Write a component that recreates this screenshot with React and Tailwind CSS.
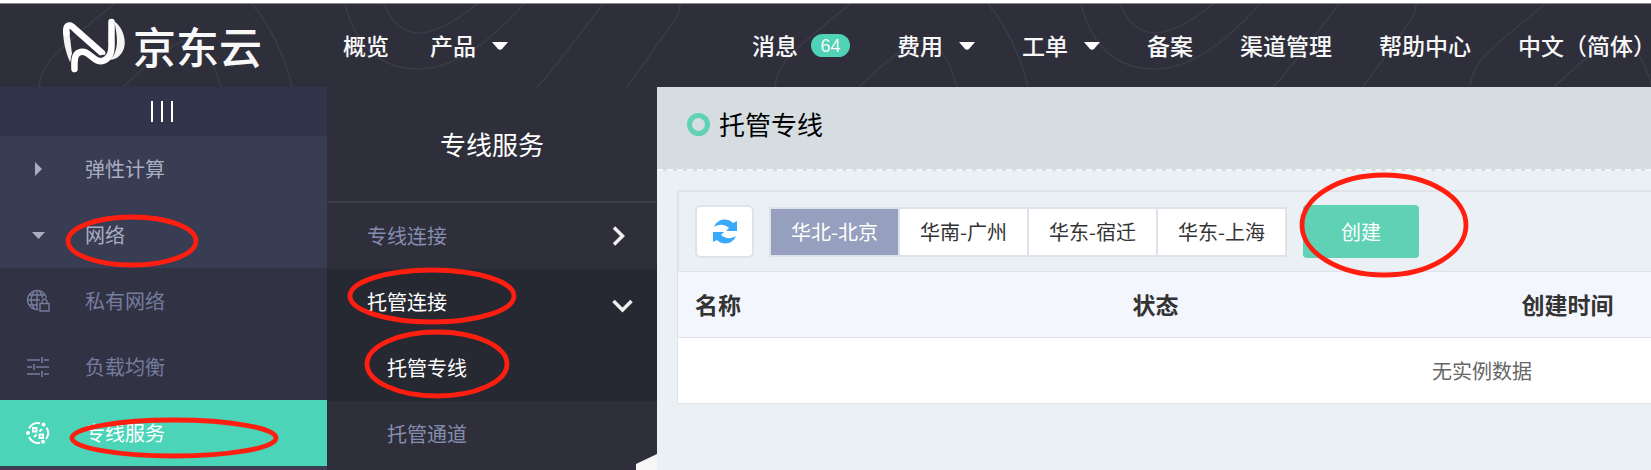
import { useState } from "react";

const MARKS = [
  [132, 241, 64, 24],
  [432, 296, 82, 26],
  [437, 364, 70, 32],
  [174, 438, 102, 18],
  [1384, 225, 82, 50],
];

function Contours() {
  return (
    <svg className="absolute inset-0 h-full w-full" fill="none" stroke="#393b47" strokeWidth="1.6" aria-hidden="true">
      <defs>
        <g id="arcs">
          <path d="M114 0C88 22 66 38 50 56Q40 70 39 83" />
          <path d="M123 83Q146 60 172 42Q188 32 200 40Q214 56 221 83" />
        </g>
        <g id="tile">
          <use href="#arcs" />
          <path d="M252 0Q280 34 292 83" />
          <path d="M384 0Q396 29 419 29T477 0" />
          <path d="M345 0Q362 65 419 65Q466 65 524 0" />
          <path d="M603 0L550 69L537 83" />
          <path d="M680 0Q680 10 672 20L627 83" />
        </g>
      </defs>
      <use href="#tile" />
      <use href="#tile" x="736" />
      <use href="#arcs" x="1431" />
    </svg>
  );
}

function Logo() {
  return (
    <svg width="65" height="57" viewBox="0 0 65 57" fill="none" stroke="#fff" strokeLinecap="round" strokeLinejoin="round" aria-hidden="true">
      <path d="M52 4C66 14 68 40 48 43C57 34 56 20 52 4Z" fill="#f4f4f4" stroke="none" />
      <path d="M1 12L7 12L10 37C8 42 9 46 8 45C3 34 1 22 1 12Z" fill="#f4f4f4" stroke="none" />
      <path strokeWidth="6.5" d="M4.500 16C3.500 11 5 8 8 8.500C10 8.800 12 11 14 13L40 36" />
      <path strokeWidth="8.500" stroke="#2e2f3b" d="M13 48C13 40 14 36 18 35C27 32 32 47 41 42" />
      <path strokeWidth="6.500" d="M12.500 52C12 42 13 37 17 35.500C27 31 32 48 42 43.500C52 39 49 26 49.500 20V5" />
    </svg>
  );
}

const Caret = () => (
  <svg width="16" height="8" viewBox="0 0 16 8" aria-hidden="true"><path d="M0 0H16L10 7Q8 8.500 6 7Z" fill="#fff" /></svg>
);

function NavLink({ children, caret, badge }) {
  return (
    <a href="#" className="flex shrink-0 items-center whitespace-nowrap">
      {children}
      {caret && <span className="ml-4"><Caret /></span>}
      {badge && <span className="ml-[13px] flex h-[23px] w-[39px] items-center justify-center rounded-full bg-[#4fd2b5] font-['Liberation_Sans'] text-lg">{badge}</span>}
    </a>
  );
}

function SideItem({ icon, children, className }) {
  return (
    <a href="#" className={"flex h-[66px] items-center pl-6 text-xl " + className}>
      <span className="mr-[33px] flex w-7 justify-center">{icon}</span>
      {children}
    </a>
  );
}

const VpcIcon = () => (
  <svg width="24" height="24" viewBox="0 0 24 24" fill="none" stroke="currentColor" strokeWidth="1.4" aria-hidden="true">
    <path d="M12.500 20.500A9.600 9.600 0 1 1 20.500 9M11 1.500V20.500M1.500 11H14M3 6H19M3 16H12M9 1.500C4 7 4 15 9 20.500M13 1.500Q16 5 16.500 9" />
    <path d="M14 14.500H23V22H14ZM16 14.500V12Q18.500 8 21 12V14.500" />
  </svg>
);
const BalanceIcon = () => (
  <svg width="24" height="24" viewBox="0 0 24 24" fill="none" stroke="currentColor" strokeWidth="1.6" aria-hidden="true">
    <path d="M1 5H14M18 5H23M1 12H6M10 12H23M1 19H14M18 19H23M16 2V8M8 9V15M16 16V22" />
  </svg>
);
const DirectIcon = () => (
  <svg width="24" height="24" viewBox="0 0 24 24" fill="none" stroke="currentColor" strokeWidth="2" aria-hidden="true">
    <path d="M3 7.500A10 10 0 0 1 14 2.200M20.500 6.500A10 10 0 0 1 20 18M14 21.800A10 10 0 0 1 3 16" />
    <path d="M7 7H10.500V10.500H7ZM13.500 13.500H17V17H13.500ZM8 16L10.500 13.500M13.500 10.500L16 8" />
    <g fill="currentColor" stroke="none"><circle cx="17.500" cy="3.500" r="2" /><circle cx="2" cy="12" r="2" /><circle cx="17" cy="20.800" r="2" /></g>
  </svg>
);

const REGIONS = ["华北-北京", "华南-广州", "华东-宿迁", "华东-上海"];

export default function App() {
  const [region, setRegion] = useState(0);
  return (
    <div className="relative flex min-h-screen flex-col overflow-hidden bg-white font-['Noto_Sans_CJK_SC',sans-serif]">
      <header className="relative mt-[3px] border-t border-[#8b8b91] bg-[#2e2f3b] text-[23px] font-medium text-[#f8f8f8]">
        <Contours />
        <nav className="relative flex h-[83px] items-center pl-[62px]">
          <a href="#" className="mr-[81px] flex shrink-0 items-center gap-1.5 text-[43px] leading-none whitespace-nowrap"><Logo />京东云</a>
          <div className="mr-[244px] flex shrink-0 gap-[41px]">
            <NavLink>概览</NavLink>
            <NavLink caret>产品</NavLink>
          </div>
          <div className="flex min-w-0 flex-1 gap-[47px]">
            <NavLink badge="64">消息</NavLink>
            <NavLink caret>费用</NavLink>
            <NavLink caret>工单</NavLink>
            <NavLink>备案</NavLink>
            <NavLink>渠道管理</NavLink>
            <NavLink>帮助中心</NavLink>
            <NavLink>中文（简体）</NavLink>
          </div>
        </nav>
      </header>
      <div className="flex flex-1">
        <aside className="w-[327px] shrink-0 bg-[#383d53]">
          <button aria-label="折叠菜单" className="flex h-[49px] w-full items-center justify-center gap-2 bg-[#31344b] pr-1">
            <i className="h-[21px] w-0.5 bg-white" /><i className="h-[21px] w-0.5 bg-white" /><i className="h-[21px] w-0.5 bg-white" />
          </button>
          <SideItem className="text-[#a9aec1]" icon={<svg width="7" height="14"><path d="M0 0L7 7L0 14Z" fill="currentColor" /></svg>}>弹性计算</SideItem>
          <SideItem className="text-[#a9aec1]" icon={<svg width="13" height="7"><path d="M0 0H13L6.500 7Z" fill="currentColor" /></svg>}>网络</SideItem>
          <SideItem className="bg-[#313344] text-[#757c9f]" icon={<VpcIcon />}>私有网络</SideItem>
          <SideItem className="bg-[#313344] text-[#757c9f]" icon={<BalanceIcon />}>负载均衡</SideItem>
          <SideItem className="bg-[#4bd4b8] text-white" icon={<DirectIcon />}>专线服务</SideItem>
        </aside>
        <aside className="relative w-[330px] shrink-0 bg-[#2e2f3b] text-xl text-[#858dae]">
          <h2 className="flex h-[116px] items-center justify-center border-b-2 border-[#383d48] text-[26px] font-normal text-white">专线服务</h2>
          <a href="#" className="flex h-[66px] items-center justify-between pr-8 pl-10">专线连接
            <svg width="13" height="20" fill="none" stroke="#eee" strokeWidth="3.500"><path d="M2 1.500L10.500 10L2 18.500" /></svg>
          </a>
          <div className="bg-[#262932] text-white">
            <a href="#" className="flex h-[66px] items-center justify-between pr-6 pl-10">托管连接
              <svg width="21" height="14" className="mt-2" fill="none" stroke="#eee" strokeWidth="3.500"><path d="M1.500 2L10.500 11L19.500 2" /></svg>
            </a>
            <a href="#" className="flex h-[66px] items-center pl-[60px]">托管专线</a>
          </div>
          <a href="#" className="flex h-[66px] items-center pl-[60px]">托管通道</a>
          <svg className="absolute right-0 bottom-0" width="21" height="16" aria-hidden="true"><path d="M0 10L21 0V16H0Z" fill="#f6f6f6" /></svg>
        </aside>
        <main className="min-w-0 flex-1 overflow-hidden bg-[#ebf0f4]">
          <div className="h-[84px] border-b-2 border-dashed border-[#f4f7f9] bg-[#d5dde0] pt-[17px] pl-[30px]">
            <h1 className="flex items-center gap-[9px] text-[26px] leading-10 text-black">
              <i className="h-[23px] w-[23px] rounded-full border-5 border-[#62d2b6]" />托管专线
            </h1>
          </div>
          <section className="mt-[19px] ml-5 border-t-2 border-[#dde3e8]">
            <div className="flex h-[79px] items-center border-l-2 border-[#dde3e8] pl-4 text-xl">
              <button aria-label="刷新" className="flex h-[53px] w-[59px] shrink-0 items-center justify-center rounded-md border-2 border-[#dde3e8] bg-white">
                <svg width="24" height="25" viewBox="0 0 24 25" fill="#38a9fb"><path d="M1 8C4 0 14 -2 20 4L24 2V12H13L16 9C11 5 6 5 1 8ZM23 17C20 25 10 27 4 21L0 23V13H11L8 16C13 20 18 20 23 17Z" /></svg>
              </button>
              <div className="mr-4 ml-[15px] flex shrink-0 divide-x-2 divide-[#dde3e8] border-2 border-[#dde3e8]">
                {REGIONS.map((r, i) => (
                  <button key={r} onClick={() => setRegion(i)} className={"h-[46px] w-[129px] whitespace-nowrap last:w-[127px] " + (i === region ? "bg-[#969fbd] text-white" : "bg-white text-[#333]")}>{r}</button>
                ))}
              </div>
              <button className="h-[53px] w-[116px] shrink-0 rounded-sm bg-[#5fd2b6] text-white">创建</button>
            </div>
            <table className="w-full min-w-[1610px] table-fixed border-collapse border border-[#dde3e8] text-left">
              <thead>
                <tr className="h-[66px] border-b border-[#dde3e8] bg-[#f3f6fc] text-[23px] text-[#333]">
                  <th className="w-[438px] pl-[17px]">名称</th><th className="w-[389px] pl-[17px]">状态</th><th className="pl-[17px]">创建时间</th>
                </tr>
              </thead>
              <tbody><tr className="h-[66px] bg-white"><td colSpan="3" className="text-center text-xl text-[#666]">无实例数据</td></tr></tbody>
            </table>
          </section>
        </main>
      </div>
      <svg className="pointer-events-none absolute inset-0 h-full w-full" fill="none" stroke="#ff1e10" strokeWidth="4.800" aria-hidden="true">
        {MARKS.map(([x, y, rx, ry]) => <ellipse key={y} cx={x} cy={y} rx={rx} ry={ry} />)}
      </svg>
    </div>
  );
}
